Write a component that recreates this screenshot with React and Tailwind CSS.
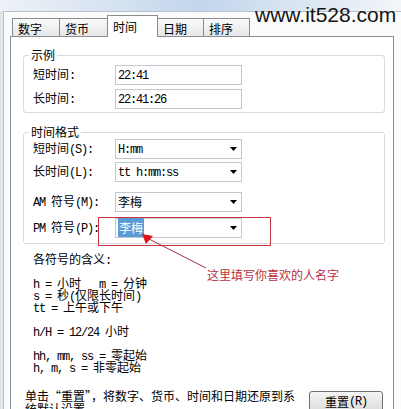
import React from "react";

const cjk = "font-['Noto_Sans_CJK_SC',sans-serif]";
const mono = "font-['Liberation_Mono','Noto_Sans_CJK_SC',monospace] tracking-[-1.2px]";

// ASCII in a narrow mono run, Chinese in CJK run (SimSun-like widths)
function Mix({ text }) {
  const parts = text.match(/[\x20-\x7e]+|[^\x20-\x7e]+/g) || [];
  return parts.map((p, i) =>
    /^[\x20-\x7e]/.test(p) ? (
      <span key={i} className={mono}>{p}</span>
    ) : (
      <span key={i} className={cjk}>{p}</span>
    )
  );
}

function DropArrow() {
  return (
    <svg width="7" height="4" viewBox="0 0 7 4" className="shrink-0">
      <path d="M0 0h7L3.5 4z" fill="#000" />
    </svg>
  );
}

function Box({ value, select, hl }) {
  return (
    <div className="w-[127px] h-[20px] border border-[#c3c7cc] bg-white flex items-center pl-[2px] pr-[4px] text-[12px] leading-[12px]">
      <div className="flex-1 whitespace-pre">
        {hl ? (
          <span className={`${cjk} bg-[#5b9bd5] text-white px-[1px] py-[1px]`}>{value}</span>
        ) : (
          <Mix text={value} />
        )}
      </div>
      {select && <DropArrow />}
    </div>
  );
}

function Row({ label, className = "", children }) {
  return (
    <div className={`flex items-center h-[20px] ${className}`}>
      <div className="w-[82px] whitespace-pre text-[12px] leading-[12px]">
        <Mix text={label} />
      </div>
      {children}
    </div>
  );
}

function Group({ title, className = "", children }) {
  return (
    <fieldset className={`ml-[12px] w-[362px] border border-[#d6dbe0] rounded-[3px] ${className}`}>
      <legend className={`ml-[5px] px-[2px] text-[12px] leading-[14px] ${cjk}`}>{title}</legend>
      <div className="pl-[9px]">{children}</div>
    </fieldset>
  );
}

const tabs = [
  { name: "数字", w: "w-[48px]" },
  { name: "货币", w: "w-[49px] -ml-px" },
  { name: "时间", w: "w-[51px] -ml-px", on: true },
  { name: "日期", w: "w-[47px] -ml-px" },
  { name: "排序", w: "w-[47px] -ml-px" },
];

const lines = [
  "各符号的含义:",
  "",
  "h = 小时   m = 分钟",
  "s = 秒(仅限长时间)",
  "tt = 上午或下午",
  "",
  "h/H = 12/24 小时",
  "",
  "hh, mm, ss = 零起始",
  "h, m, s = 非零起始",
];

export default function App() {
  return (
    <div className="w-[401px] h-[409px] overflow-hidden relative bg-[#dfe6ee] text-black">
      <div className="h-[11px] bg-gradient-to-r from-[#eef2f7] via-[#c3d6ec] to-[#f2f5f9]" />
      <div className="ml-[3px] border-l border-t border-[#b7c0cc] bg-[#fbfbfb] h-[398px] pl-[6px]">
        {/* tabs */}
        <div className="flex items-end h-[21px] mt-[3px] pl-[2px] relative z-10">
          {tabs.map((t) =>
            t.on ? (
              <div
                key={t.name}
                className={`${t.w} h-[22px] -mb-px relative z-10 bg-white border-l border-t border-r border-[#898c95] pl-[5px] pt-[5px] text-[12px] leading-[12px] ${cjk}`}
              >
                {t.name}
              </div>
            ) : (
              <div
                key={t.name}
                className={`${t.w} h-[18px] bg-gradient-to-b from-[#fbfbfb] to-[#e6e6e6] border-l border-t border-r border-[#898c95] pl-[5px] pt-[4px] text-[12px] leading-[12px] ${cjk}`}
              >
                {t.name}
              </div>
            )
          )}
        </div>

        {/* panel */}
        <div className="w-[384px] h-[380px] border border-[#898c95] bg-white">
          <Group title="示例" className="mt-[11px]">
            <div className="pt-[3px] pb-[3px]">
              <Row label="短时间:">
                <Box value="22:41" />
              </Row>
              <Row label="长时间:" className="mt-[4px]">
                <Box value="22:41:26" />
              </Row>
            </div>
          </Group>

          <Group title="时间格式" className="mt-[12px]">
            <div className="pb-[5px]">
              <Row label="短时间(S):">
                <Box value="H:mm" select />
              </Row>
              <Row label="长时间(L):" className="mt-[3px]">
                <Box value="tt h:mm:ss" select />
              </Row>
              <Row label="AM 符号(M):" className="mt-[10px]">
                <Box value="李梅" select />
              </Row>
              <Row label="PM 符号(P):" className="mt-[6px]">
                <Box value="李梅" select hl />
              </Row>
            </div>
          </Group>

          <div className="mt-[9px] pl-[22px] text-[12px] leading-[12px]">
            {lines.map((l, i) => (
              <div key={i} className="h-[12px] whitespace-pre">
                <Mix text={l} />
              </div>
            ))}
          </div>

          <div className="flex items-start mt-[16px] pl-[14px]">
            <div className={`w-[278px] text-[12px] leading-[13px] ${cjk}`}>
              单击“重置”，将数字、货币、时间和日期还原到系统默认设置。
            </div>
            <div className="ml-[6px] mt-[2px] w-[74px] h-[22px] border border-[#707070] rounded-[3px] bg-gradient-to-b from-[#f4f4f4] to-[#dcdcdc] flex justify-center pt-[4px] text-[12px] leading-[12px] whitespace-pre">
              <Mix text="重置(R)" />
            </div>
          </div>
        </div>
      </div>

      {/* watermark */}
      <div className="absolute left-[255px] top-[4px] text-[21px] leading-[21px] font-['Liberation_Sans',sans-serif] text-[#151515]">
        www.it528.com
      </div>

      {/* annotation */}
      <div className="absolute left-[98px] top-[217px] w-[173px] h-[29px] border border-[#c73540]" />
      <svg className="absolute left-0 top-0" width="401" height="409">
        <line x1="149" y1="239" x2="206" y2="268" stroke="#a8303c" strokeWidth="1" />
        <path d="M142 234 L153 236 L146 244 Z" fill="#e0141e" />
      </svg>
      <div className={`absolute left-[207px] top-[269px] text-[12px] leading-[12px] text-[#b8303f] ${cjk}`}>
        这里填写你喜欢的人名字
      </div>
    </div>
  );
}
